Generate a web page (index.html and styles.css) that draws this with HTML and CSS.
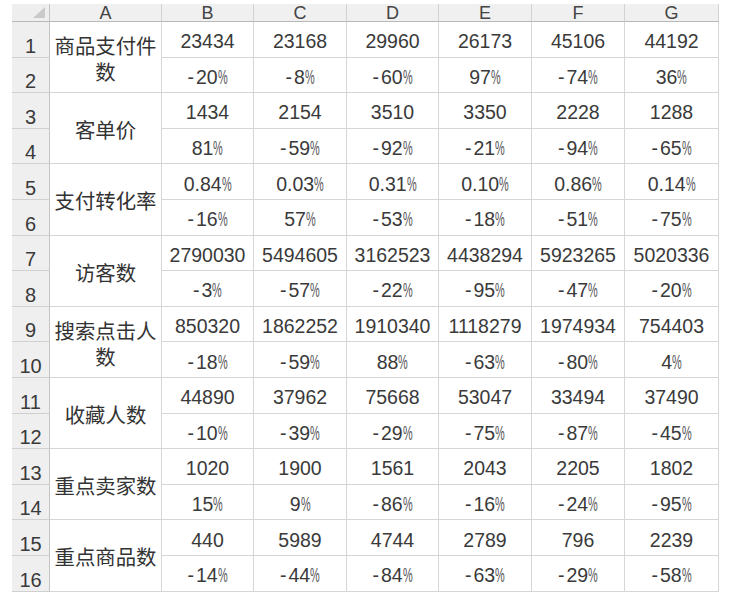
FILE: index.html
```html
<!DOCTYPE html>
<html lang="zh">
<head>
<meta charset="utf-8">
<title>Sheet</title>
<link rel="stylesheet" href="styles.css">
</head>
<body>
<div class="sheet">
  <div class="corner"></div>
  <div class="ch">A</div><div class="ch">B</div><div class="ch">C</div><div class="ch">D</div><div class="ch">E</div><div class="ch">F</div><div class="ch">G</div>

  <div class="rh">1</div><div class="label">商品支付件数</div>
  <div class="c">23434</div><div class="c">23168</div><div class="c">29960</div><div class="c">26173</div><div class="c">45106</div><div class="c">44192</div>
  <div class="rh">2</div>
  <div class="c"><span class="neg">-</span>20<span class="pct">%</span></div><div class="c"><span class="neg">-</span>8<span class="pct">%</span></div><div class="c"><span class="neg">-</span>60<span class="pct">%</span></div><div class="c">97<span class="pct">%</span></div><div class="c"><span class="neg">-</span>74<span class="pct">%</span></div><div class="c">36<span class="pct">%</span></div>

  <div class="rh">3</div><div class="label">客单价</div>
  <div class="c">1434</div><div class="c">2154</div><div class="c">3510</div><div class="c">3350</div><div class="c">2228</div><div class="c">1288</div>
  <div class="rh">4</div>
  <div class="c">81<span class="pct">%</span></div><div class="c"><span class="neg">-</span>59<span class="pct">%</span></div><div class="c"><span class="neg">-</span>92<span class="pct">%</span></div><div class="c"><span class="neg">-</span>21<span class="pct">%</span></div><div class="c"><span class="neg">-</span>94<span class="pct">%</span></div><div class="c"><span class="neg">-</span>65<span class="pct">%</span></div>

  <div class="rh">5</div><div class="label">支付转化率</div>
  <div class="c">0.84<span class="pct">%</span></div><div class="c">0.03<span class="pct">%</span></div><div class="c">0.31<span class="pct">%</span></div><div class="c">0.10<span class="pct">%</span></div><div class="c">0.86<span class="pct">%</span></div><div class="c">0.14<span class="pct">%</span></div>
  <div class="rh">6</div>
  <div class="c"><span class="neg">-</span>16<span class="pct">%</span></div><div class="c">57<span class="pct">%</span></div><div class="c"><span class="neg">-</span>53<span class="pct">%</span></div><div class="c"><span class="neg">-</span>18<span class="pct">%</span></div><div class="c"><span class="neg">-</span>51<span class="pct">%</span></div><div class="c"><span class="neg">-</span>75<span class="pct">%</span></div>

  <div class="rh">7</div><div class="label">访客数</div>
  <div class="c">2790030</div><div class="c">5494605</div><div class="c">3162523</div><div class="c">4438294</div><div class="c">5923265</div><div class="c">5020336</div>
  <div class="rh">8</div>
  <div class="c"><span class="neg">-</span>3<span class="pct">%</span></div><div class="c"><span class="neg">-</span>57<span class="pct">%</span></div><div class="c"><span class="neg">-</span>22<span class="pct">%</span></div><div class="c"><span class="neg">-</span>95<span class="pct">%</span></div><div class="c"><span class="neg">-</span>47<span class="pct">%</span></div><div class="c"><span class="neg">-</span>20<span class="pct">%</span></div>

  <div class="rh">9</div><div class="label">搜索点击人数</div>
  <div class="c">850320</div><div class="c">1862252</div><div class="c">1910340</div><div class="c">1118279</div><div class="c">1974934</div><div class="c">754403</div>
  <div class="rh">10</div>
  <div class="c"><span class="neg">-</span>18<span class="pct">%</span></div><div class="c"><span class="neg">-</span>59<span class="pct">%</span></div><div class="c">88<span class="pct">%</span></div><div class="c"><span class="neg">-</span>63<span class="pct">%</span></div><div class="c"><span class="neg">-</span>80<span class="pct">%</span></div><div class="c">4<span class="pct">%</span></div>

  <div class="rh">11</div><div class="label">收藏人数</div>
  <div class="c">44890</div><div class="c">37962</div><div class="c">75668</div><div class="c">53047</div><div class="c">33494</div><div class="c">37490</div>
  <div class="rh">12</div>
  <div class="c"><span class="neg">-</span>10<span class="pct">%</span></div><div class="c"><span class="neg">-</span>39<span class="pct">%</span></div><div class="c"><span class="neg">-</span>29<span class="pct">%</span></div><div class="c"><span class="neg">-</span>75<span class="pct">%</span></div><div class="c"><span class="neg">-</span>87<span class="pct">%</span></div><div class="c"><span class="neg">-</span>45<span class="pct">%</span></div>

  <div class="rh">13</div><div class="label">重点卖家数</div>
  <div class="c">1020</div><div class="c">1900</div><div class="c">1561</div><div class="c">2043</div><div class="c">2205</div><div class="c">1802</div>
  <div class="rh">14</div>
  <div class="c">15<span class="pct">%</span></div><div class="c">9<span class="pct">%</span></div><div class="c"><span class="neg">-</span>86<span class="pct">%</span></div><div class="c"><span class="neg">-</span>16<span class="pct">%</span></div><div class="c"><span class="neg">-</span>24<span class="pct">%</span></div><div class="c"><span class="neg">-</span>95<span class="pct">%</span></div>

  <div class="rh">15</div><div class="label">重点商品数</div>
  <div class="c">440</div><div class="c">5989</div><div class="c">4744</div><div class="c">2789</div><div class="c">796</div><div class="c">2239</div>
  <div class="rh">16</div>
  <div class="c"><span class="neg">-</span>14<span class="pct">%</span></div><div class="c"><span class="neg">-</span>44<span class="pct">%</span></div><div class="c"><span class="neg">-</span>84<span class="pct">%</span></div><div class="c"><span class="neg">-</span>63<span class="pct">%</span></div><div class="c"><span class="neg">-</span>29<span class="pct">%</span></div><div class="c"><span class="neg">-</span>58<span class="pct">%</span></div>
</div>
</body>
</html>
```
FILE: styles.css
```css
* { box-sizing: border-box; }
html, body { margin: 0; padding: 0; background: #fff; }
body {
  width: 732px;
  height: 593px;
  overflow: hidden;
  font-family: "Liberation Sans", "Noto Sans CJK SC", sans-serif;
  color: #3a3a3a;
}
.sheet {
  display: grid;
  grid-template-columns: 38px 112px 92px 93px 92px 93px 93px 94px;
  grid-template-rows: 18px repeat(16, 35.6px);
  margin: 4px 0 0 12px;
  width: 707px;
}
.sheet > div {
  border-right: 1px solid #d6d6d6;
  border-bottom: 1px solid #d6d6d6;
}
.corner {
  position: relative;
  background: #eeeeee;
  border-right-color: #c4c4c4 !important;
  border-bottom-color: #b8b8b8 !important;
}
.corner::after {
  content: "";
  position: absolute;
  right: 4px;
  bottom: 3px;
  width: 12px;
  height: 11px;
  background: #c9c9c9;
  clip-path: polygon(100% 0, 100% 100%, 0 100%);
}
.ch {
  background: #f0f0f0;
  border-right-color: #d2d2d2 !important;
  border-bottom-color: #b8b8b8 !important;
  display: flex;
  align-items: center;
  justify-content: center;
  font-size: 18px;
  line-height: 18px;
  color: #444;
  padding-top: 1px;
}
.rh {
  background: #efefef;
  border-right-color: #c4c4c4 !important;
  border-bottom-color: #d0d0d0 !important;
  display: flex;
  align-items: flex-end;
  justify-content: center;
  font-size: 20px;
  line-height: 20px;
  color: #3a3a3a;
  padding-bottom: 1px;
}
.label {
  grid-row: span 2;
  display: flex;
  align-items: center;
  justify-content: center;
  text-align: center;
  font-family: "Noto Sans CJK SC", sans-serif;
  font-size: 20.4px;
  line-height: 26px;
  padding: 2px 4px 0;
  color: #333;
}
.c {
  display: flex;
  align-items: center;
  justify-content: center;
  font-size: 19.5px;
  line-height: 20px;
  padding-top: 4px;
  color: #3a3a3a;
  white-space: nowrap;
}
.neg {
  margin-right: 2px;
}
.pct {
  display: inline-block;
  width: 0.5em;
  transform: scaleX(0.56);
  transform-origin: left center;
  color: #555;
}
```
